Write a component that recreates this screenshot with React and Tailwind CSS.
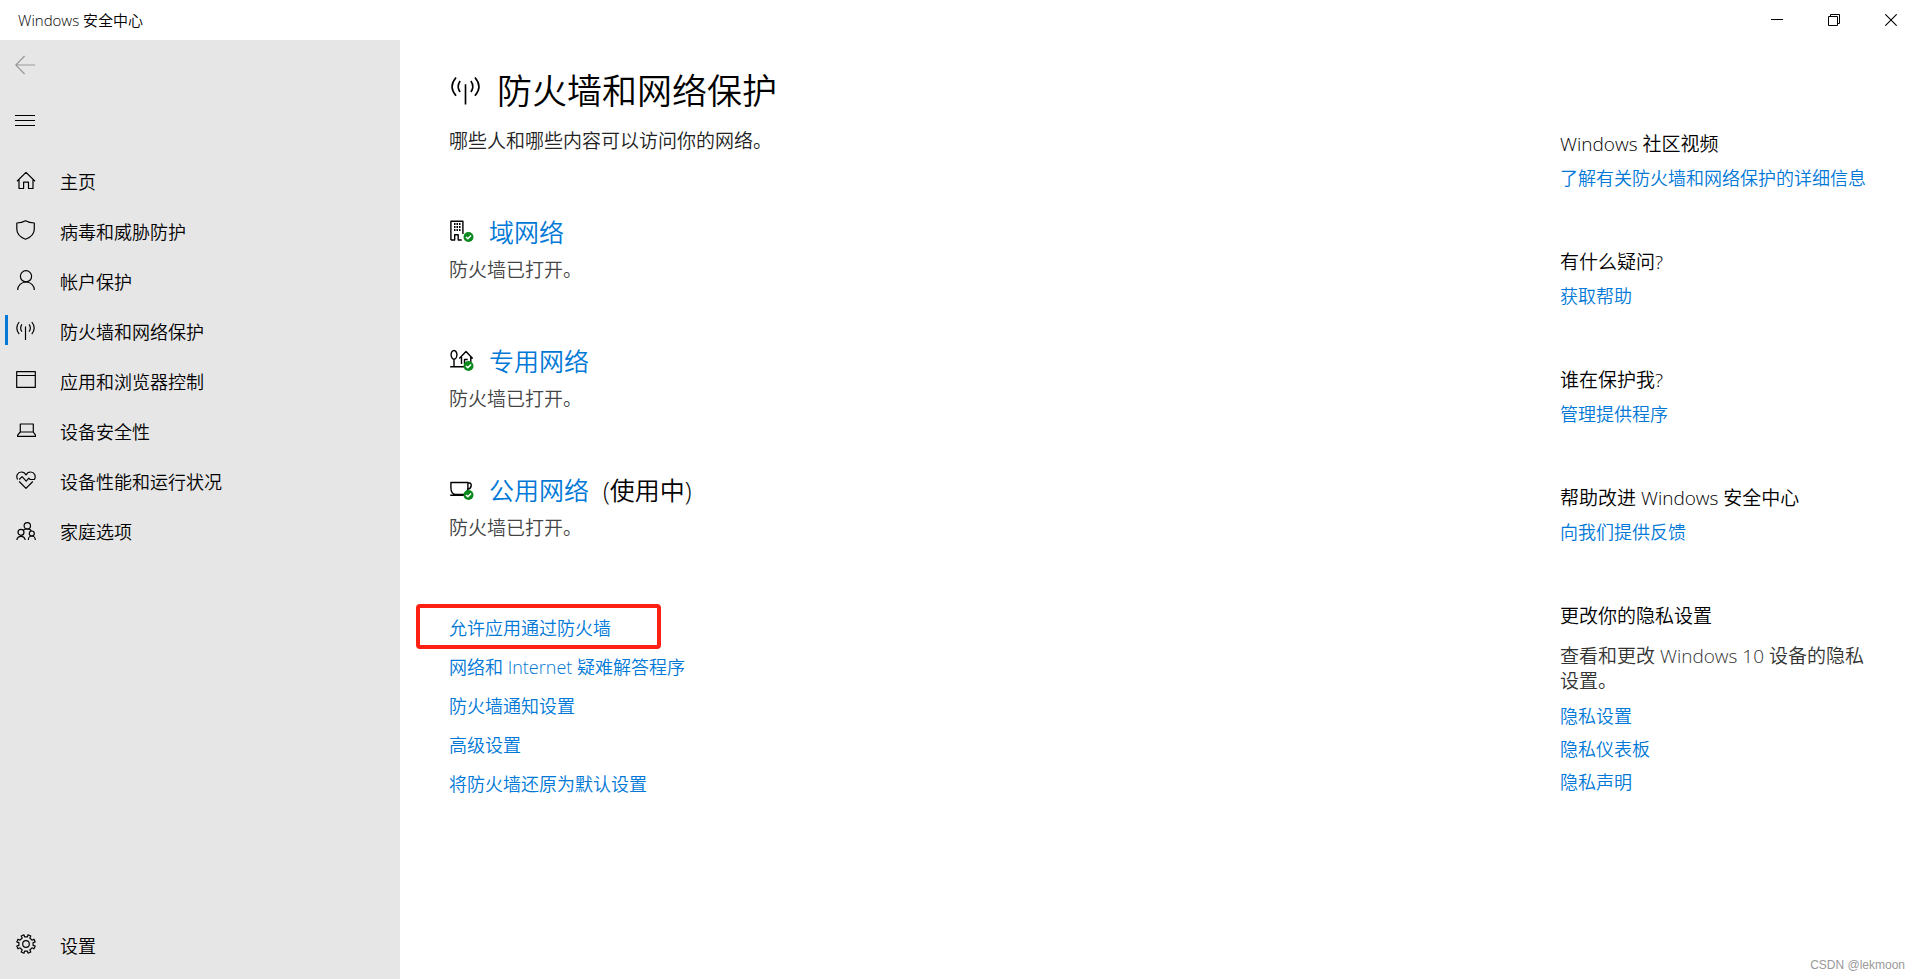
// Windows 安全中心 - 防火墙和网络保护

const stroke = {
  fill: 'none',
  stroke: 'currentColor',
  strokeWidth: 1.2,
  strokeLinejoin: 'round',
};

const NavSvg = ({ children }) => (
  <svg viewBox="0 0 20 20" className="h-5 w-5 shrink-0" aria-hidden="true" {...stroke}>
    {children}
  </svg>
);

const HomeIcon = () => (
  <NavSvg>
    <path d="M1 11.2 10 2.4l9 8.8M3 9.5v9h4.6v-6.3h4.9v6.3H17v-9" />
  </NavSvg>
);

const ShieldIcon = () => (
  <NavSvg>
    <path d="M9.5.8C7 2.3 4 3 .8 3v6c0 5 3.4 8.3 8.7 10.2C14.9 17.3 18.3 14 18.3 9V3c-3.2 0-6.2-.7-8.8-2.2Z" />
  </NavSvg>
);

const PersonIcon = () => (
  <NavSvg>
    <circle cx="10" cy="6.3" r="5.6" />
    <path d="M1.6 20A8.4 8 0 0 1 18.4 20" />
  </NavSvg>
);

const AntennaIcon = () => (
  <NavSvg>
    <path d="M9.5 6.5V20M5.9 4.3Q3.4 8 5.9 11.7M13.1 4.3Q15.6 8 13.1 11.7M3.2 2Q-1.6 8 3.2 14.2M15.8 2Q20.6 8 15.8 14.2" />
  </NavSvg>
);

const WindowIcon = () => (
  <NavSvg>
    <path d="M.7 1.6h18.6v15.8H.7zM.7 5.5h18.6" />
  </NavSvg>
);

const LaptopIcon = () => (
  <NavSvg>
    <path d="M4.3 12V4h13v8M4.3 12h13l2.2 3.2v1.2H1.6v-1.2Z" />
  </NavSvg>
);

const HeartIcon = () => (
  <NavSvg>
    <path d="M1.6 9.5C-.3 6 1.5 2 5.4 2c2.2 0 3.8 1.2 4.6 3 .8-1.8 2.4-3 4.6-3 3.9 0 5.7 4 3.8 7.5h-4.2l-1.4-1.4-2.6 3-4.1-4.5L3.2 9.5M3.2 11.5l6.8 6.8 6.8-6.8" />
  </NavSvg>
);

const FamilyIcon = () => (
  <NavSvg>
    <circle cx="11.3" cy="5.8" r="3.2" />
    <circle cx="5" cy="12.3" r="3" />
    <circle cx="15.8" cy="13.5" r="2.5" />
    <path d="M.8 20a4.3 4.7 0 0 1 8.4 0M12.3 20a3.5 4 0 0 1 7 0M7.2 10.2Q8 9 11.3 9 14.5 9 15.3 11" />
  </NavSvg>
);

const GearIcon = () => (
  <NavSvg>
    <circle cx="10" cy="10" r="3.3" />
    <path d="M8.6 2.9 8 .8 5.2 2l1 2L4 6.2l-2-1L.8 8l2.1.6v2.8L.8 12 2 14.8l2-1L6.2 16l-1 2L8 19.2l.6-2.1h2.8l.6 2.1 2.8-1.2-1-2 2.2-2.2 2 1 1.2-2.8-2.1-.6V8.6l2.1-.6L18 5.2l-2 1L13.8 4l1-2L12 .8l-.6 2.1Z" />
  </NavSvg>
);

const CheckBadge = () => (
  <g>
    <circle cx="18.5" cy="17" r="5" fill="#0a8a1e" stroke="none" />
    <path d="m16 17 1.8 1.8 3.2-3.3" stroke="#fff" strokeWidth="1.5" />
  </g>
);

const NetworkSvg = ({ children }) => (
  <svg viewBox="-1 0 24 24" className="h-6 w-6 shrink-0 overflow-visible" aria-hidden="true" {...stroke} strokeWidth="1.4">
    {children}
    <CheckBadge />
  </svg>
);

const BuildingIcon = () => (
  <NetworkSvg>
    <path d="M.9 20V1.2h12V14M.9 20h3.8v-5.2h3.5V20h3.5" />
    <path d="M4 4h1.5M6.5 4H8M9 4h1.5M4 7h1.5M6.5 7H8M9 7h1.5M4 10h1.5M6.5 10H8M9 10h1.5" strokeWidth="2" />
  </NetworkSvg>
);

const HouseTreeIcon = () => (
  <NetworkSvg>
    <ellipse cx="4" cy="5.8" rx="2.9" ry="4.3" />
    <path d="M4 10v7.5M.2 17.8H14M9.3 9.5 16 2.5l6.7 7M11.5 8v7M20.8 8v5M14.5 15v-4.5h3.2" />
  </NetworkSvg>
);

const CupIcon = () => (
  <NetworkSvg>
    <path d="M.9 4.5h17v5c0 4-2 7-5 7H6c-3.3 0-5.1-3-5.1-7ZM17.9 5h1.6c2.5 0 2.5 5.5-1.6 6M.2 17.3H14" />
  </NetworkSvg>
);

const navItems = [
  { name: '主页', icon: HomeIcon },
  { name: '病毒和威胁防护', icon: ShieldIcon },
  { name: '帐户保护', icon: PersonIcon },
  { name: '防火墙和网络保护', icon: AntennaIcon, active: true },
  { name: '应用和浏览器控制', icon: WindowIcon },
  { name: '设备安全性', icon: LaptopIcon },
  { name: '设备性能和运行状况', icon: HeartIcon },
  { name: '家庭选项', icon: FamilyIcon },
];

const networks = [
  { name: '域网络', icon: BuildingIcon },
  { name: '专用网络', icon: HouseTreeIcon },
  { name: '公用网络', icon: CupIcon, note: '(使用中)' },
];

const actions = [
  { name: '允许应用通过防火墙', marked: true },
  { name: '网络和 Internet 疑难解答程序' },
  { name: '防火墙通知设置' },
  { name: '高级设置' },
  { name: '将防火墙还原为默认设置' },
];

const helpSections = [
  { title: 'Windows 社区视频', link: '了解有关防火墙和网络保护的详细信息' },
  { title: '有什么疑问?', link: '获取帮助' },
  { title: '谁在保护我?', link: '管理提供程序' },
  { title: '帮助改进 Windows 安全中心', link: '向我们提供反馈' },
];

const privacyLinks = ['隐私设置', '隐私仪表板', '隐私声明'];

const TextLink = ({ children, className = '' }) => (
  <a href="#" className={`text-[#0078d7] hover:text-gray-500 ${className}`}>
    {children}
  </a>
);

const NavItem = ({ item }) => (
  <a
    href="#"
    aria-current={item.active ? 'page' : undefined}
    className="flex h-[50px] items-center pl-[5px] text-[18px] hover:bg-black/5"
  >
    <span className={`mr-2 h-[30px] w-[3px] ${item.active ? 'bg-[#0078d7]' : ''}`} />
    <item.icon />
    <span className="ml-6 pt-[3px] leading-6">{item.name}</span>
  </a>
);

const TitleBar = () => (
  <header className="flex h-10 items-center justify-between pl-[18px] pr-px">
    <span className="text-[15px]">Windows 安全中心</span>
    <div className="flex h-full">
      <button aria-label="最小化" className="flex w-[57px] items-center justify-center hover:bg-gray-200">
        <svg viewBox="0 0 12 12" className="h-3 w-3" {...stroke} strokeWidth="1">
          <path d="M0 5.5h12" />
        </svg>
      </button>
      <button aria-label="还原" className="flex w-[57px] items-center justify-center hover:bg-gray-200">
        <svg viewBox="0 0 12 12" className="h-3 w-3" {...stroke} strokeWidth="1" strokeLinejoin="miter">
          <path d="M.5 2.5h9v9h-9zM2.5 2.5v-2h9v9h-2" />
        </svg>
      </button>
      <button aria-label="关闭" className="flex w-[57px] items-center justify-center hover:bg-gray-200">
        <svg viewBox="0 0 12 12" className="h-3 w-3" {...stroke} strokeWidth="1.1">
          <path d="m.3.3 11.4 11.4M11.7.3.3 11.7" />
        </svg>
      </button>
    </div>
  </header>
);

const Sidebar = () => (
  <aside className="flex w-[400px] shrink-0 flex-col bg-[#e6e6e6] pb-[10px]">
    <button aria-label="后退" className="flex h-[50px] w-[50px] items-center justify-center text-[#999]">
      <svg viewBox="0 0 20 20" className="h-5 w-5" {...stroke} strokeLinejoin="miter">
        <path d="M20 10H1M9.6 1 .8 10l8.8 9" />
      </svg>
    </button>
    <button aria-label="菜单" className="mt-[5px] flex h-[50px] w-[50px] items-center justify-center">
      <svg viewBox="0 0 20 12" className="h-3 w-5" {...stroke} strokeWidth="1">
        <path d="M0 1.5h20M0 6.5h20M0 11.5h20" />
      </svg>
    </button>
    <nav className="mt-[10px]">
      {navItems.map((item) => (
        <NavItem key={item.name} item={item} />
      ))}
    </nav>
    <div className="mt-auto">
      <NavItem item={{ name: '设置', icon: GearIcon }} />
    </div>
  </aside>
);

const HelpPanel = () => (
  <aside className="mr-5 w-[340px] shrink-0 pt-[92px]">
    {helpSections.map((section) => (
      <section key={section.title} className="mb-[60px]">
        <h2 className="text-[19px] leading-[25px]">{section.title}</h2>
        <TextLink className="mt-[9px] block text-[18px] leading-6">{section.link}</TextLink>
      </section>
    ))}
    <section>
      <h2 className="text-[19px] leading-[25px]">更改你的隐私设置</h2>
      <p className="mt-[15px] w-80 text-[19px] leading-[25px] text-[#333]">
        查看和更改 Windows 10 设备的隐私设置。
      </p>
      <ul className="mt-[10px] flex flex-col gap-[9px] text-[18px] leading-6">
        {privacyLinks.map((name) => (
          <li key={name}>
            <TextLink>{name}</TextLink>
          </li>
        ))}
      </ul>
    </section>
  </aside>
);

export default function App() {
  return (
    <div className="relative flex min-h-screen flex-col bg-white font-['Open_Sans','Noto_Sans_CJK_SC',sans-serif] font-[350] text-black">
      <TitleBar />
      <div className="flex flex-1">
        <Sidebar />

        <main className="flex-1 pl-[49px] pt-[26px]">
          <div className="flex items-center gap-[18px]">
            <svg viewBox="-1 1 20 20" className="h-[30px] w-[30px] overflow-visible" aria-hidden="true" {...stroke} strokeWidth="1.1">
              <path d="M10 6.5V20M6.4 4.3Q3.9 8 6.4 11.7M13.6 4.3Q16.1 8 13.6 11.7M3.7 2Q-1.6 8 3.7 14.2M16.3 2Q21.6 8 16.3 14.2" />
            </svg>
            <h1 className="text-[35px] leading-[50px]">防火墙和网络保护</h1>
          </div>
          <p className="mt-[13px] text-[19px] leading-[25px] text-[#222]">哪些人和哪些内容可以访问你的网络。</p>

          <div className="mt-[60px] flex flex-col gap-[60px]">
            {networks.map((network) => (
              <section key={network.name}>
                <h2 className="flex items-center text-[25px] leading-9">
                  <network.icon />
                  <TextLink className="ml-4">{network.name}</TextLink>
                  {network.note && <span className="ml-[14px]">{network.note}</span>}
                </h2>
                <p className="mt-2 text-[19px] leading-[25px] text-[#444]">防火墙已打开。</p>
              </section>
            ))}
          </div>

          <ul className="mt-[68px] flex flex-col text-[18px] leading-[39px]">
            {actions.map((action) => (
              <li key={action.name} className="relative">
                {action.marked && (
                  <span className="pointer-events-none absolute -left-[33px] -top-[5px] h-[45px] w-[245px] rounded-[4px] border-4 border-[#ff2014]" />
                )}
                <TextLink>{action.name}</TextLink>
              </li>
            ))}
          </ul>
        </main>

        <HelpPanel />
      </div>
      <span className="absolute bottom-[6px] right-[15px] font-['Liberation_Sans',sans-serif] text-[12px] leading-4 text-[#999]">
        CSDN @lekmoon
      </span>
    </div>
  );
}
